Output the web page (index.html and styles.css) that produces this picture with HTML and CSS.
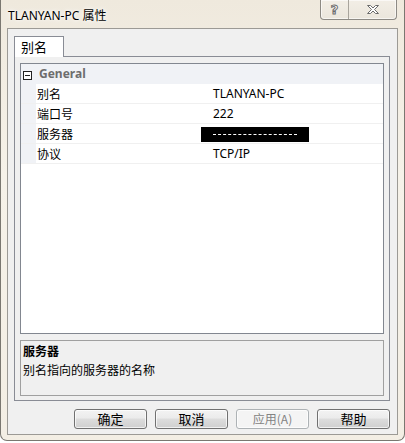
FILE: index.html
```html
<!DOCTYPE html>
<html lang="zh">
<head>
<meta charset="utf-8">
<title>TLANYAN-PC 属性</title>
<link rel="stylesheet" href="styles.css">
</head>
<body>
<div class="window">
  <div class="titlebar">
    <span class="title">TLANYAN-PC 属性</span>
    <div class="caption-btns">
      <span class="cap-btn help">?</span>
      <span class="cap-btn close">
        <svg width="14" height="11" viewBox="0 0 14 11"><path d="M1.5 1.5 L4.5 1.5 L7 4 L9.5 1.5 L12.5 1.5 L8.5 5.5 L12.5 9.5 L9.5 9.5 L7 7 L4.5 9.5 L1.5 9.5 L5.5 5.5 Z" fill="#fff" stroke="#6b6b6b" stroke-width="1" stroke-linejoin="round"/></svg>
      </span>
    </div>
  </div>
  <div class="client">
    <div class="tabs">
      <div class="tab">别名</div>
    </div>
    <div class="tab-panel">
      <div class="grid">
        <div class="row header">
          <span class="gutter"><span class="collapse"></span></span>
          <span class="cat">General</span>
        </div>
        <div class="row">
          <span class="gutter"></span>
          <span class="name">别名</span>
          <span class="value">TLANYAN-PC</span>
        </div>
        <div class="row">
          <span class="gutter"></span>
          <span class="name">端口号</span>
          <span class="value">222</span>
        </div>
        <div class="row">
          <span class="gutter"></span>
          <span class="name">服务器</span>
          <span class="value"><span class="redact"><span class="redact-line"></span></span></span>
        </div>
        <div class="row">
          <span class="gutter"></span>
          <span class="name">协议</span>
          <span class="value">TCP/IP</span>
        </div>
      </div>
      <div class="desc">
        <div class="desc-title">服务器</div>
        <div class="desc-text">别名指向的服务器的名称</div>
      </div>
    </div>
    <div class="buttons">
      <button class="btn">确定</button>
      <button class="btn">取消</button>
      <button class="btn disabled">应用(A)</button>
      <button class="btn">帮助</button>
    </div>
  </div>
</div>
</body>
</html>
```
FILE: styles.css
```css
html, body {
  margin: 0;
  padding: 0;
  background: #ffffff;
}
body {
  font-family: "Noto Sans", "Noto Sans CJK SC", sans-serif;
  font-size: 12px;
  color: #000;
}
.window {
  width: 405px;
  height: 441px;
  box-sizing: border-box;
  border: 1px solid #7a7770;
  border-top: none;
  border-radius: 0 0 7px 7px;
  background: linear-gradient(180deg, #efe9dd 0%, #f6f2e9 40%, #f3eee4 100%);
  padding: 0 6px 0 6px;
  display: flex;
  flex-direction: column;
}
.titlebar {
  height: 28px;
  position: relative;
  display: flex;
  align-items: center;
}
.title {
  font-size: 12px;
  padding-left: 1px;
  padding-top: 2px;
  color: #000;
  text-shadow: 0 0 6px #fff, 0 0 3px #fff;
}
.caption-btns {
  position: absolute;
  right: 1px;
  top: 0;
  display: flex;
  height: 19px;
  border: 1px solid #8d8a84;
  border-top: none;
  border-radius: 0 0 4px 4px;
  background: linear-gradient(180deg, #f2eee6, #ebe6dc);
  box-shadow: inset 0 0 0 1px rgba(255,255,255,0.6);
}
.cap-btn {
  display: flex;
  align-items: center;
  justify-content: center;
  height: 19px;
  color: #fff;
}
.help {
  width: 27px;
  border-right: 1px solid #a8a49c;
  font-family: "DejaVu Sans", sans-serif;
  font-size: 13px;
  font-weight: bold;
  color: #fff;
  -webkit-text-stroke: 1px #6b6b6b;
}
.close {
  width: 47px;
}
.client {
  flex: 1;
  margin-bottom: 5px;
  background: #f0f0f0;
  border: 1px solid #9c9a95;
  padding: 7px 7px 0 6px;
  display: flex;
  flex-direction: column;
}
.tabs {
  display: flex;
  height: 20px;
  position: relative;
  z-index: 1;
}
.tab {
  width: 50px;
  height: 21px;
  box-sizing: border-box;
  background: #fff;
  border: 1px solid #898c95;
  border-bottom: none;
  padding-left: 6px;
  font-family: "Noto Sans CJK SC", sans-serif;
  font-size: 13px;
  line-height: 20px;
}
.tab-panel {
  height: 345px;
  box-sizing: border-box;
  border: 1px solid #898c95;
  background: #f0f0f0;
  padding: 6px 5px 4px 5px;
  display: flex;
  flex-direction: column;
  gap: 6px;
}
.grid {
  height: 272px;
  box-sizing: border-box;
  border: 1px solid #828790;
  background: #fff;
}
.row {
  height: 20px;
  display: flex;
  align-items: stretch;
  box-sizing: border-box;
  border-bottom: 1px solid #f0f0f0;
  font-family: "Noto Sans CJK SC", sans-serif;
  font-size: 12px;
}
.row.header {
  background: #f0f2f6;
  border-bottom: none;
}
.gutter {
  width: 15px;
  background: #f0f2f6;
  display: flex;
  align-items: center;
  justify-content: flex-start;
}
.collapse {
  width: 9px;
  height: 9px;
  box-sizing: border-box;
  border: 1px solid #222;
  background: #fff;
  position: relative;
  margin-left: 2px;
  margin-top: 2px;
}
.collapse::after {
  content: "";
  position: absolute;
  left: 1px;
  right: 1px;
  top: 3px;
  height: 1px;
  background: #222;
}
.cat {
  padding-left: 3px;
  font-family: "Noto Sans", sans-serif;
  font-weight: bold;
  color: #6d6d6d;
  line-height: 20px;
}
.name {
  width: 164px;
  padding-left: 1px;
  line-height: 19px;
}
.value {
  flex: 1;
  padding-left: 12px;
  font-family: "Noto Sans", sans-serif;
  line-height: 19px;
  display: flex;
  align-items: center;
}
.redact {
  margin-left: -12px;
  width: 108px;
  height: 15px;
  background: #000;
  display: flex;
  align-items: center;
  justify-content: center;
  margin-top: 2px;
}
.redact-line {
  width: 84px;
  height: 1px;
  border-top: 1px dashed #fff;
}
.desc {
  height: 56px;
  box-sizing: border-box;
  border: 1px solid #a0a0a0;
  background: #f0f0f0;
  padding: 1px 2px;
  font-family: "Noto Sans CJK SC", sans-serif;
  font-size: 12px;
}
.desc-title {
  font-weight: bold;
  line-height: 18px;
}
.desc-text {
  line-height: 20px;
}
.buttons {
  display: flex;
  justify-content: flex-end;
  gap: 8px;
  padding-top: 8px;
  padding-right: 0;
}
.btn {
  width: 73px;
  height: 20px;
  box-sizing: border-box;
  border: 1px solid #707070;
  border-radius: 3px;
  background: linear-gradient(180deg, #f3f3f3 0%, #ebebeb 45%, #dddddd 50%, #cfcfcf 100%);
  font-family: "Noto Sans CJK SC", sans-serif;
  font-size: 13px;
  line-height: 16px;
  padding: 0;
  color: #000;
  box-shadow: inset 0 0 0 1px rgba(255,255,255,0.7);
}
.btn.disabled {
  border-color: #adb2b5;
  background: #f4f4f4;
  color: #838383;
  font-size: 12px;
}
```
